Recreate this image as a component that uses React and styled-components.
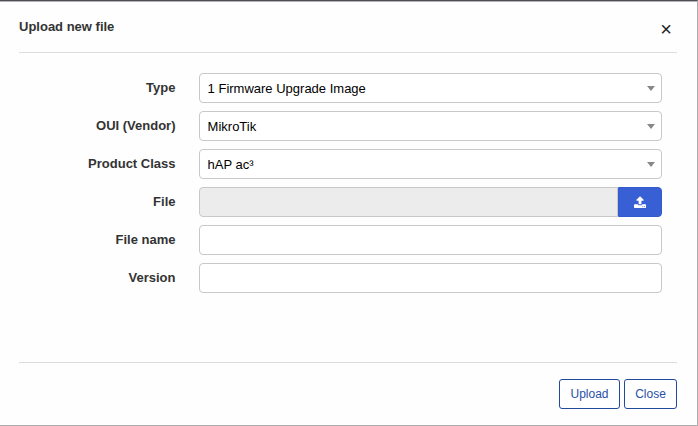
import React from "react";
import styled, { createGlobalStyle } from "styled-components";

const GlobalStyle = createGlobalStyle`
  *, *::before, *::after { box-sizing: border-box; }
  body {
    margin: 0;
    overflow: hidden;
    background: #fefefe;
    font-family: "Liberation Sans", Arial, sans-serif;
    font-size: 13px;
    color: #333;
  }
`;

const Dialog = styled.section`
  display: flex;
  flex-direction: column;
  width: 698px;
  height: 426px;
  padding: 0 20px 0 19px;
  background: #fefefe;
  border-top: 1px solid #4d4d52;
  border-right: 1px solid #adadad;
  border-bottom: 1px solid #adadad;
  box-shadow: inset 0 1px 0 #b4b4b8;
`;

const Header = styled.header`
  display: flex;
  justify-content: space-between;
  height: 52px;
  border-bottom: 1px solid #ddd;
`;

const Title = styled.h1`
  margin: 18px 0 0;
  font-size: 13px;
  line-height: 16px;
  font-weight: bold;
`;

const Dismiss = styled.button`
  display: flex;
  align-items: center;
  justify-content: center;
  width: 22px;
  height: 22px;
  margin-top: 17px;
  padding: 0;
  border: 0;
  background: none;
  color: #222;
  font: 20px/22px "Liberation Sans", Arial, sans-serif;
`;

const Form = styled.form`
  display: flex;
  flex-direction: column;
  flex: 1;
  gap: 8px;
  padding: 20px 15px 0 0;
`;

const Row = styled.div`
  display: grid;
  grid-template-columns: 156.5px 463px;
  justify-content: space-between;
  height: 30px;
`;

const Label = styled.label`
  line-height: 30px;
  font-weight: bold;
  text-align: right;
`;

const Select = styled.div`
  display: flex;
  align-items: center;
  justify-content: space-between;
  padding: 1px 6px 0 7.6px;
  border: 1px solid #c8c8c8;
  border-radius: 4px;
  background: #fff;
  color: #000;

  &::after {
    content: "";
    border: 4px solid transparent;
    border-top: 5px solid #888;
    border-bottom: 0;
  }
`;

const Input = styled.input`
  width: 100%;
  min-width: 0;
  height: 30px;
  padding: 0 8px;
  border: 1px solid #c8c8c8;
  border-radius: 4px;
  background: #fff;
  font: inherit;

  &:read-only {
    flex: 1;
    border-radius: 4px 0 0 4px;
    background: #ececec;
  }
`;

const FilePicker = styled.div`
  display: flex;
`;

const PickButton = styled.button`
  display: flex;
  align-items: center;
  justify-content: center;
  width: 44px;
  height: 30px;
  padding: 0;
  border: 1px solid #345bce;
  border-radius: 0 4px 4px 0;
  background: #395fd4;
  color: #fff;
`;

const Footer = styled.footer`
  display: flex;
  justify-content: flex-end;
  gap: 4px;
  height: 63px;
  padding-top: 16px;
  border-top: 1px solid #ddd;
`;

const Action = styled.button`
  width: ${({ $width }) => $width}px;
  height: 30px;
  padding: 0;
  border: 1px solid #204a9c;
  border-radius: 3px;
  background: #fff;
  color: #2850a8;
  font: 12px/28px "Liberation Sans", Arial, sans-serif;
`;

const UploadIcon = () => (
  <svg width="12.07" height="13" viewBox="0 0 1664 1792" fill="currentColor" aria-hidden="true">
    <path d="M1280 1472q0-26-19-45t-45-19-45 19-19 45 19 45 45 19 45-19 19-45zm256 0q0-26-19-45t-45-19-45 19-19 45 19 45 45 19 45-19 19-45zm128-224v320q0 40-28 68t-68 28h-1472q-40 0-68-28t-28-68v-320q0-40 28-68t68-28h427q21 56 70.5 92t110.5 36h256q61 0 110.5-36t70.5-92h427q40 0 68 28t28 68zm-325-648q-17 40-59 40h-256v448q0 26-19 45t-45 19h-256q-26 0-45-19t-19-45v-448h-256q-42 0-59-40-17-39 14-69l448-448q18-19 45-19t45 19l448 448q31 30 14 69z" />
  </svg>
);

const selects = [
  ["Type", "1 Firmware Upgrade Image"],
  ["OUI (Vendor)", "MikroTik"],
  ["Product Class", "hAP ac³"],
];

export default function App() {
  return (
    <>
      <GlobalStyle />
      <Dialog role="dialog">
        <Header>
          <Title>Upload new file</Title>
          <Dismiss aria-label="Dismiss">×</Dismiss>
        </Header>
        <Form>
          {selects.map(([label, value]) => (
            <Row key={label}>
              <Label>{label}</Label>
              <Select>{value}</Select>
            </Row>
          ))}
          <Row>
            <Label>File</Label>
            <FilePicker>
              <Input readOnly />
              <PickButton type="button" aria-label="Choose file">
                <UploadIcon />
              </PickButton>
            </FilePicker>
          </Row>
          <Row>
            <Label htmlFor="file-name">File name</Label>
            <Input id="file-name" />
          </Row>
          <Row>
            <Label htmlFor="version">Version</Label>
            <Input id="version" />
          </Row>
        </Form>
        <Footer>
          <Action $width={61}>Upload</Action>
          <Action $width={53}>Close</Action>
        </Footer>
      </Dialog>
    </>
  );
}
